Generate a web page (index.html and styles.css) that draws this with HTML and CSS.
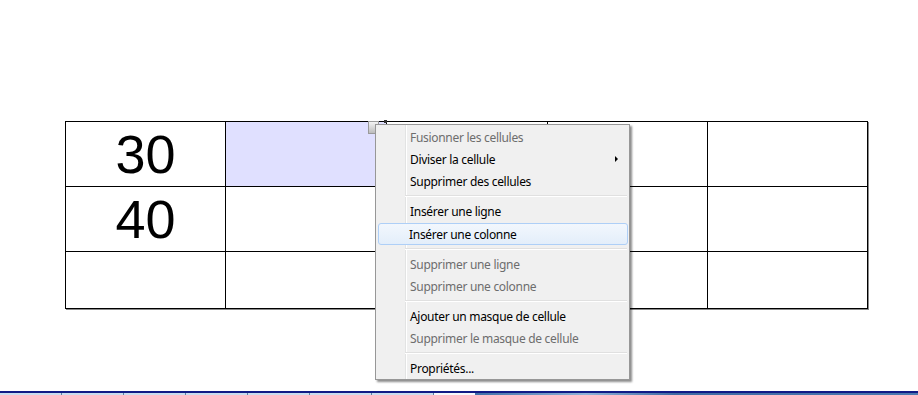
FILE: index.html
```html
<!DOCTYPE html>
<html lang="fr">
  <head>
    <meta charset="UTF-8" />
    <title>Tableau</title>
    <link rel="stylesheet" href="styles.css">
  </head>
  <body>
    <div class="sheet">
      <table class="grid">
        <colgroup>
          <col class="c160" />
          <col class="c161" />
          <col class="c161" />
          <col class="c160" />
          <col class="c160" />
        </colgroup>
        <tr class="row-hi">
          <td class="num">30</td>
          <td class="sel"></td>
          <td></td>
          <td></td>
          <td></td>
        </tr>
        <tr class="row-hi">
          <td class="num">40</td>
          <td></td>
          <td></td>
          <td></td>
          <td></td>
        </tr>
        <tr class="row-lo">
          <td></td>
          <td></td>
          <td></td>
          <td></td>
          <td></td>
        </tr>
      </table>
    </div>

    <span class="handle"></span>
    <span class="col-mark"></span>

    <ul class="menu">
      <li class="off">Fusionner les cellules</li>
      <li class="sub">Diviser la cellule</li>
      <li>Supprimer des cellules</li>
      <li class="sep"></li>
      <li>Insérer une ligne</li>
      <li class="hover">Insérer une colonne</li>
      <li class="sep"></li>
      <li class="off">Supprimer une ligne</li>
      <li class="off">Supprimer une colonne</li>
      <li class="sep"></li>
      <li>Ajouter un masque de cellule</li>
      <li class="off">Supprimer le masque de cellule</li>
      <li class="sep"></li>
      <li>Propriétés...</li>
    </ul>

    <div class="taskbar">
      <div class="tabs">
        <span></span><span></span><span></span><span></span><span></span><span></span><span></span><span class="cur"></span>
      </div>
      <div class="band"></div>
    </div>
  </body>
</html>
```

FILE: styles.css
```css
html,
body {
  margin: 0;
  padding: 0;
  background: #fff;
}
body {
  height: 395px;
  display: flex;
  flex-direction: column;
  overflow: hidden;
}
.sheet {
  padding: 121px 0 0 65px;
}
.grid {
  border-collapse: collapse;
  table-layout: fixed;
  width: 803px;
  box-shadow: 1px 1px 0 #8a8a8a;
}
.grid td {
  border: 1px solid #000;
  padding: 0;
}
.c160 {
  width: 160px;
}
.c161 {
  width: 161px;
}
.row-hi td {
  height: 64px;
}
.row-lo td {
  height: 56px;
}
.num {
  font-family: "Liberation Sans", Arial, sans-serif;
  font-size: 54px;
  text-align: center;
  line-height: 1;
  color: #000;
}
.sel {
  background: #e0e0ff;
}

.handle {
  position: absolute;
  left: 368px;
  top: 121px;
  width: 9px;
  height: 11px;
  border: 1px solid #9a9a9a;
  background: linear-gradient(#f4f4f4, #bdbdbd);
}
.col-mark {
  position: absolute;
  left: 384px;
  top: 120px;
  width: 3px;
  height: 3px;
  background: #333;
}

.menu {
  position: absolute;
  left: 375px;
  top: 124px;
  width: 250px;
  margin: 0;
  padding: 1px 1px 0 2px;
  list-style: none;
  border: 1px solid #979797;
  background: linear-gradient(to right, #f0f0f0 29px, #e2e3e3 29px, #e2e3e3 30px, #fff 30px, #fff 31px, #f0f0f0 31px);
  box-shadow: 2px 2px 2px rgba(0, 0, 0, 0.45);
  font-family: "Noto Sans", "Open Sans", sans-serif;
  font-size: 12px;
  letter-spacing: -0.3px;
  color: #000;
}
.menu li {
  position: relative;
  height: 22px;
  line-height: 23px;
  padding-left: 32px;
  white-space: nowrap;
}
.menu li.off {
  color: #6d6d6d;
}
.menu li.hover {
  height: 20px;
  line-height: 21px;
  margin-top: 1px;
  margin-bottom: 1px;
  padding-left: 30px;
  border: 1px solid #aecff7;
  border-radius: 3px;
  background: linear-gradient(#f2f7fd, #e3eefa);
}
.menu li.sub::after {
  content: "";
  position: absolute;
  right: 10px;
  top: 8px;
  border-style: solid;
  border-width: 3px 0 3px 3px;
  border-color: transparent transparent transparent #000;
}
.menu li.sep {
  height: 0;
  padding: 0;
  margin: 3px 1px 3px 27px;
  border-top: 1px solid #e0e0e0;
  border-bottom: 1px solid #fff;
}

.taskbar {
  margin-top: auto;
  height: 2px;
  border-top: 2px solid #101a86;
  display: flex;
}
.tabs {
  width: 475px;
  display: flex;
  background: #c8dcef;
}
.tabs span {
  width: 61px;
  border-right: 1px solid #5a7fa6;
}
.tabs span.cur {
  flex: 1;
  border-right: 0;
  background: #f4f8fc;
}
.band {
  flex: 1;
  background: linear-gradient(to right, #3f6fa8, #8fb2d8 25%, #3e6aa3 45%, #4a78b0);
}
```
